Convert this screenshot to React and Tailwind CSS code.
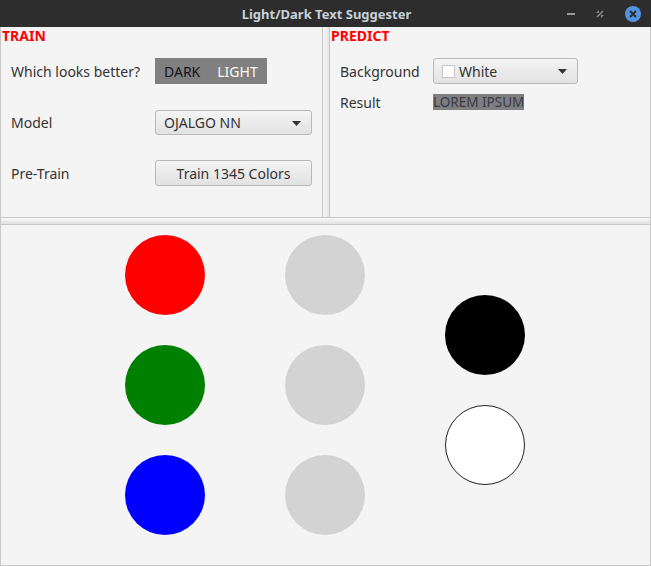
import React from "react";

const font = { fontFamily: '"Noto Sans", "Open Sans", sans-serif' };

function Arrow() {
  return (
    <svg width="9" height="5" viewBox="0 0 9 5" className="ml-auto">
      <path d="M0 0 L9 0 L4.5 5 Z" fill="#333333" />
    </svg>
  );
}

function Circle({ cls }) {
  return <div className={`w-[80px] h-[80px] rounded-full ${cls}`} />;
}

export default function App() {
  return (
    <div className="w-[651px] h-[566px] flex flex-col bg-[#f4f4f4] text-[14px] leading-[20px] text-[#333333] overflow-hidden" style={font}>
      {/* title bar */}
      <div className="h-[27px] bg-[#2d2d2d] flex items-center relative shrink-0">
        <div className="flex-1 text-center font-bold text-[13px] text-[#c8d0d8] pl-[2px]">Light/Dark Text Suggester</div>
        <div className="absolute right-0 top-0 h-[27px] flex items-center">
          <div className="w-[8px] h-[2px] bg-[#9a9a9a] mr-[21px]" />
          <svg width="8" height="8" viewBox="0 0 8 8" className="mr-[21px]">
            <path d="M0 3 L3 0 L3 3 Z M8 5 L5 8 L5 5 Z" fill="#8a8a8a" />
            <path d="M1 7 L7 1" stroke="#8a8a8a" strokeWidth="1.6" />
          </svg>
          <div className="w-[16px] h-[16px] rounded-full bg-[#5294e2] flex items-center justify-center mr-[10px]">
            <svg width="8" height="8" viewBox="0 0 8 8">
              <path d="M1 1 L7 7 M7 1 L1 7" stroke="#2d2d2d" strokeWidth="2" />
            </svg>
          </div>
        </div>
      </div>

      <div className="flex-1 flex flex-col border-l border-r border-b border-[#c8c8c8]">
        {/* top section */}
        <div className="h-[190px] flex shrink-0">
          {/* TRAIN pane */}
          <div className="w-[321px] flex flex-col">
            <div className="text-[#ff0000] font-bold text-[14px] leading-[18px] pl-[1px]">TRAIN</div>
            <div className="flex flex-col gap-[25px] pl-[10px] mt-[13px]">
              <div className="flex items-center h-[26px]">
                <div className="w-[144px] pt-[2px]">Which looks better?</div>
                <div className="w-[112px] h-[26px] bg-[#808080] flex items-center pt-[2px]">
                  <span className="text-[#111122] pl-[9px]">DARK</span>
                  <span className="text-[#fffaf0] pl-[17px]">LIGHT</span>
                </div>
              </div>
              <div className="flex items-center h-[26px]">
                <div className="w-[144px] pt-[2px]">Model</div>
                <div className="w-[157px] h-[25px] rounded-[3px] border border-[#b8b8b8] bg-gradient-to-b from-[#f4f4f4] to-[#e2e2e2] flex items-center px-[8px] pr-[10px] pt-[2px]">
                  <span>OJALGO NN</span>
                  <Arrow />
                </div>
              </div>
              <div className="flex items-center h-[26px]">
                <div className="w-[144px] pt-[2px]">Pre-Train</div>
                <div className="w-[157px] h-[26px] rounded-[3px] border border-[#b8b8b8] bg-gradient-to-b from-[#f4f4f4] to-[#e2e2e2] flex items-center justify-center pt-[2px]">
                  Train 1345 Colors
                </div>
              </div>
            </div>
          </div>
          {/* vertical divider */}
          <div className="w-[8px] border-l border-r border-[#c6c6c6] bg-gradient-to-r from-[#f6f6f6] to-[#e6e6e6]" />
          {/* PREDICT pane */}
          <div className="flex-1 flex flex-col">
            <div className="text-[#ff0000] font-bold text-[14px] leading-[18px] pl-[1px]">PREDICT</div>
            <div className="flex flex-col pl-[10px] mt-[13px]">
              <div className="flex items-center h-[26px]">
                <div className="w-[93px] pt-[2px]">Background</div>
                <div className="w-[145px] h-[26px] rounded-[3px] border border-[#b8b8b8] bg-gradient-to-b from-[#f4f4f4] to-[#e2e2e2] flex items-center pl-[8px] pr-[10px]">
                  <div className="w-[13px] h-[13px] bg-white border border-[#c4c4c4] mr-[4px]" />
                  <span className="pt-[2px]">White</span>
                  <Arrow />
                </div>
              </div>
              <div className="flex items-center h-[16px] mt-[10px]">
                <div className="w-[93px] pt-[2px]">Result</div>
                <div className="h-[16px] bg-[#7f7f7f] text-[#3a3a48] text-[13.5px] leading-[17px]">LOREM IPSUM</div>
              </div>
            </div>
          </div>
        </div>
        {/* horizontal divider */}
        <div className="h-[8px] border-t border-b border-[#c6c6c6] bg-gradient-to-b from-[#f8f8f8] to-[#e2e2e2] shrink-0" />
        {/* canvas */}
        <div className="flex-1 flex pl-[124px] pt-[10px] gap-[80px]">
          <div className="flex flex-col gap-[30px]">
            <Circle cls="bg-[#ff0000]" />
            <Circle cls="bg-[#008000]" />
            <Circle cls="bg-[#0000ff]" />
          </div>
          <div className="flex flex-col gap-[30px]">
            <Circle cls="bg-[#d3d3d3]" />
            <Circle cls="bg-[#d3d3d3]" />
            <Circle cls="bg-[#d3d3d3]" />
          </div>
          <div className="flex flex-col gap-[30px] pt-[60px]">
            <Circle cls="bg-[#000000]" />
            <Circle cls="bg-white border border-[#222222]" />
          </div>
        </div>
      </div>
    </div>
  );
}
